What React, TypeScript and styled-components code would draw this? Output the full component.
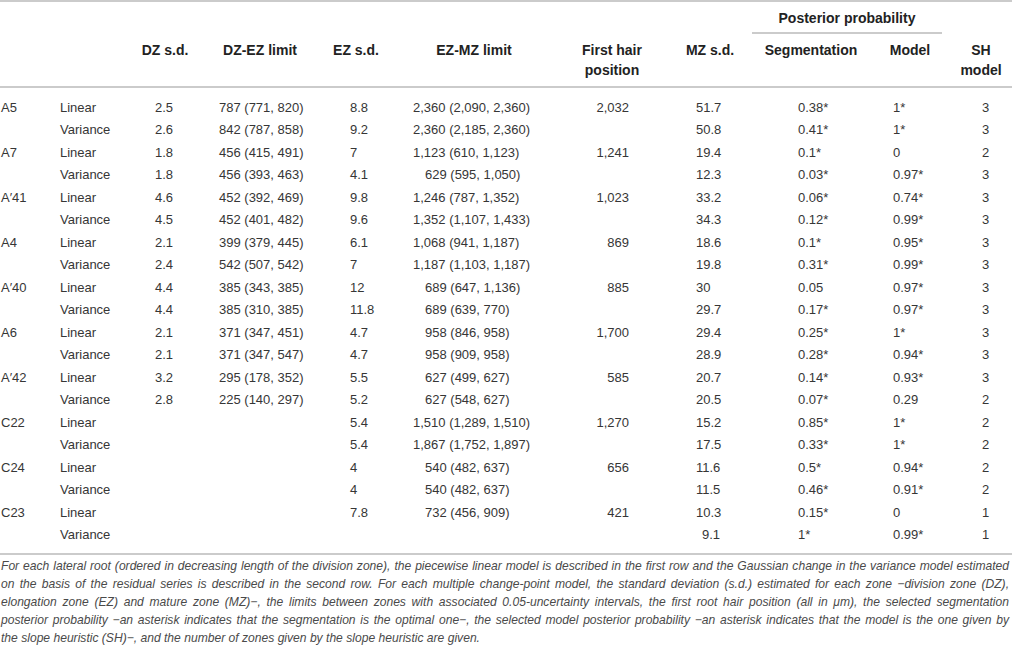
import { FunctionComponent, JSX } from 'react';
import styled, { createGlobalStyle } from "styled-components";

const GlobalStyle = createGlobalStyle`
  body {
    margin: 0;
    background: #ffffff;
  }
`;

// column widths, shared by header and rows
const COLS = '56px 74px 70px 120px 72px 164px 112px 84px 118px 80px 62px';

type Row = {
  root: string;
  model: string;
  dz: string;
  dzez: string;
  ez: string;
  ezmz: string;
  hair: string;
  mz: string;
  seg: string;
  mod: string;
  sh: string;
};

const rows: Row[] = [
  { root: 'A5', model: 'Linear', dz: '2.5', dzez: '787 (771, 820)', ez: '8.8', ezmz: '2,360 (2,090, 2,360)', hair: '2,032', mz: '51.7', seg: '0.38*', mod: '1*', sh: '3' },
  { root: '', model: 'Variance', dz: '2.6', dzez: '842 (787, 858)', ez: '9.2', ezmz: '2,360 (2,185, 2,360)', hair: '', mz: '50.8', seg: '0.41*', mod: '1*', sh: '3' },
  { root: 'A7', model: 'Linear', dz: '1.8', dzez: '456 (415, 491)', ez: '7', ezmz: '1,123 (610, 1,123)', hair: '1,241', mz: '19.4', seg: '0.1*', mod: '0', sh: '2' },
  { root: '', model: 'Variance', dz: '1.8', dzez: '456 (393, 463)', ez: '4.1', ezmz: '629 (595, 1,050)', hair: '', mz: '12.3', seg: '0.03*', mod: '0.97*', sh: '3' },
  { root: 'A′41', model: 'Linear', dz: '4.6', dzez: '452 (392, 469)', ez: '9.8', ezmz: '1,246 (787, 1,352)', hair: '1,023', mz: '33.2', seg: '0.06*', mod: '0.74*', sh: '3' },
  { root: '', model: 'Variance', dz: '4.5', dzez: '452 (401, 482)', ez: '9.6', ezmz: '1,352 (1,107, 1,433)', hair: '', mz: '34.3', seg: '0.12*', mod: '0.99*', sh: '3' },
  { root: 'A4', model: 'Linear', dz: '2.1', dzez: '399 (379, 445)', ez: '6.1', ezmz: '1,068 (941, 1,187)', hair: '869', mz: '18.6', seg: '0.1*', mod: '0.95*', sh: '3' },
  { root: '', model: 'Variance', dz: '2.4', dzez: '542 (507, 542)', ez: '7', ezmz: '1,187 (1,103, 1,187)', hair: '', mz: '19.8', seg: '0.31*', mod: '0.99*', sh: '3' },
  { root: 'A′40', model: 'Linear', dz: '4.4', dzez: '385 (343, 385)', ez: '12', ezmz: '689 (647, 1,136)', hair: '885', mz: '30', seg: '0.05', mod: '0.97*', sh: '3' },
  { root: '', model: 'Variance', dz: '4.4', dzez: '385 (310, 385)', ez: '11.8', ezmz: '689 (639, 770)', hair: '', mz: '29.7', seg: '0.17*', mod: '0.97*', sh: '3' },
  { root: 'A6', model: 'Linear', dz: '2.1', dzez: '371 (347, 451)', ez: '4.7', ezmz: '958 (846, 958)', hair: '1,700', mz: '29.4', seg: '0.25*', mod: '1*', sh: '3' },
  { root: '', model: 'Variance', dz: '2.1', dzez: '371 (347, 547)', ez: '4.7', ezmz: '958 (909, 958)', hair: '', mz: '28.9', seg: '0.28*', mod: '0.94*', sh: '3' },
  { root: 'A′42', model: 'Linear', dz: '3.2', dzez: '295 (178, 352)', ez: '5.5', ezmz: '627 (499, 627)', hair: '585', mz: '20.7', seg: '0.14*', mod: '0.93*', sh: '3' },
  { root: '', model: 'Variance', dz: '2.8', dzez: '225 (140, 297)', ez: '5.2', ezmz: '627 (548, 627)', hair: '', mz: '20.5', seg: '0.07*', mod: '0.29', sh: '2' },
  { root: 'C22', model: 'Linear', dz: '', dzez: '', ez: '5.4', ezmz: '1,510 (1,289, 1,510)', hair: '1,270', mz: '15.2', seg: '0.85*', mod: '1*', sh: '2' },
  { root: '', model: 'Variance', dz: '', dzez: '', ez: '5.4', ezmz: '1,867 (1,752, 1,897)', hair: '', mz: '17.5', seg: '0.33*', mod: '1*', sh: '2' },
  { root: 'C24', model: 'Linear', dz: '', dzez: '', ez: '4', ezmz: '540 (482, 637)', hair: '656', mz: '11.6', seg: '0.5*', mod: '0.94*', sh: '2' },
  { root: '', model: 'Variance', dz: '', dzez: '', ez: '4', ezmz: '540 (482, 637)', hair: '', mz: '11.5', seg: '0.46*', mod: '0.91*', sh: '2' },
  { root: 'C23', model: 'Linear', dz: '', dzez: '', ez: '7.8', ezmz: '732 (456, 909)', hair: '421', mz: '10.3', seg: '0.15*', mod: '0', sh: '1' },
  { root: '', model: 'Variance', dz: '', dzez: '', ez: '', ezmz: '', hair: '', mz: '9.1', seg: '1*', mod: '0.99*', sh: '1' },
];

const Page = styled.div`
  font-family: "Liberation Sans", Arial, sans-serif;
  width: 1012px;
  height: 647px;
  overflow: hidden;
  background: #ffffff;
`;

const Table = styled.div`
  border-top: 2px solid #cbcbcb;
  border-bottom: 2px solid #cbcbcb;
`;

const HeadGrid = styled.div`
  display: grid;
  grid-template-columns: ${COLS};
  grid-template-rows: 32px auto;
  border-bottom: 2px solid #cbcbcb;
`;

const HeadCell = styled.div<{ $col: number }>`
  grid-column: ${({ $col }) => $col};
  grid-row: 2;
  padding: 6px 0 6px 0;
  text-align: center;
  font-size: 14px;
  font-weight: bold;
  line-height: 20px;
  color: #222222;
`;

const GroupHead = styled.div`
  grid-column: 9 / span 2;
  grid-row: 1;
  margin-right: 8px;
  border-bottom: 2px solid #cbcbcb;
  display: flex;
  align-items: center;
  justify-content: center;
  font-size: 14px;
  font-weight: bold;
  color: #222222;
  span {
    position: relative;
    top: 1px;
  }
`;

const Body = styled.div`
  padding: 8px 0 7px 0;
`;

const DataRow = styled.div`
  display: grid;
  grid-template-columns: ${COLS};
  height: 22.5px;
  align-items: center;
`;

const Cell = styled.div<{ $pad: number; $right?: boolean }>`
  font-size: 13px;
  color: #363636;
  white-space: nowrap;
  padding-left: ${({ $right, $pad }) => ($right ? 0 : $pad)}px;
  padding-right: ${({ $right, $pad }) => ($right ? $pad : 0)}px;
  text-align: ${({ $right }) => ($right ? 'right' : 'left')};
`;

const Note = styled.div`
  padding: 2px 3px 0 1px;
  font-size: 12.1px;
  font-style: italic;
  line-height: 18px;
  color: #4a4a4a;
`;

const NoteLine = styled.div<{ $last?: boolean }>`
  text-align: justify;
  text-align-last: ${({ $last }) => ($last ? 'left' : 'justify')};
  white-space: nowrap;
`;

const headers: { col: number; text: string[] }[] = [
  { col: 3, text: ['DZ s.d.'] },
  { col: 4, text: ['DZ-EZ limit'] },
  { col: 5, text: ['EZ s.d.'] },
  { col: 6, text: ['EZ-MZ limit'] },
  { col: 7, text: ['First hair', 'position'] },
  { col: 8, text: ['MZ s.d.'] },
  { col: 9, text: ['Segmentation'] },
  { col: 10, text: ['Model'] },
  { col: 11, text: ['SH', 'model'] },
];

const noteLines = [
  'For each lateral root (ordered in decreasing length of the division zone), the piecewise linear model is described in the first row and the Gaussian change in the variance model estimated',
  'on the basis of the residual series is described in the second row. For each multiple change-point model, the standard deviation (s.d.) estimated for each zone \u2212division zone (DZ),',
  'elongation zone (EZ) and mature zone (MZ)\u2212, the limits between zones with associated 0.05-uncertainty intervals, the first root hair position (all in \u03bcm), the selected segmentation',
  'posterior probability \u2212an asterisk indicates that the segmentation is the optimal one\u2212, the selected model posterior probability \u2212an asterisk indicates that the model is the one given by',
  'the slope heuristic (SH)\u2212, and the number of zones given by the slope heuristic are given.',
];

// a main number without thousands separator sits a bit further right
const limitPad = (v: string) => {
  const comma = v.indexOf(',');
  return comma > -1 && comma < v.indexOf(' ') ? 21 : 33;
};

const App: FunctionComponent = (): JSX.Element => {
  return (
    <Page>
      <GlobalStyle />
      <Table>
        <HeadGrid>
          <GroupHead><span>Posterior probability</span></GroupHead>
          {headers.map((h) => (
            <HeadCell key={h.col} $col={h.col}>
              {h.text.map((t, i) => <div key={i}>{t}</div>)}
            </HeadCell>
          ))}
        </HeadGrid>
        <Body>
          {rows.map((r, i) => (
            <DataRow key={i}>
              <Cell $pad={1}>{r.root}</Cell>
              <Cell $pad={4}>{r.model}</Cell>
              <Cell $pad={25}>{r.dz}</Cell>
              <Cell $pad={19}>{r.dzez}</Cell>
              <Cell $pad={30}>{r.ez}</Cell>
              <Cell $pad={limitPad(r.ezmz)}>{r.ezmz}</Cell>
              <Cell $pad={39} $right>{r.hair}</Cell>
              <Cell $pad={r.mz.length < 4 && r.mz.includes('.') ? 34 : 28}>{r.mz}</Cell>
              <Cell $pad={46}>{r.seg}</Cell>
              <Cell $pad={23}>{r.mod}</Cell>
              <Cell $pad={32}>{r.sh}</Cell>
            </DataRow>
          ))}
        </Body>
      </Table>
      <Note>
        {noteLines.map((line, i) => (
          <NoteLine key={i} $last={i === noteLines.length - 1}>{line}</NoteLine>
        ))}
      </Note>
    </Page>
  );
};

export default App;
